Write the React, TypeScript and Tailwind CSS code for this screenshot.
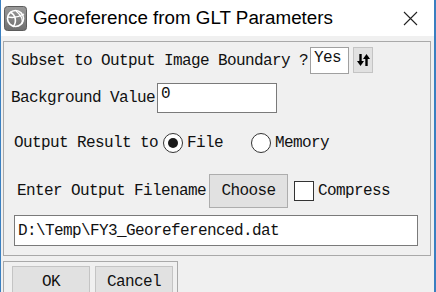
import React from "react";

// Dialog: Georeference from GLT Parameters

const mono = "font-['Liberation_Mono','DejaVu_Sans_Mono',monospace] text-[16px] tracking-[-0.6px] text-[#111]";

const GlobeIcon = () => (
  <svg width="23" height="25" viewBox="0 0 23 25">
    <defs>
      <linearGradient id="g" x1="0" y1="0" x2="0" y2="1">
        <stop offset="0" stopColor="#9a9a9a" />
        <stop offset="1" stopColor="#6e6e6e" />
      </linearGradient>
    </defs>
    <rect x="0.5" y="0.5" width="22" height="24" rx="3" fill="url(#g)" stroke="#5c5c5c" />
    <circle cx="11.5" cy="12.5" r="8" fill="none" stroke="#fff" strokeWidth="1.6" />
    <path d="M6 6 C12 9 13 16 9 21" fill="none" stroke="#fff" strokeWidth="1.6" />
    <path d="M4 11 C9 12 15 11 20 8" fill="none" stroke="#fff" strokeWidth="1.4" />
    <path d="M12 5 C17 9 19 14 18 18" fill="none" stroke="#fff" strokeWidth="1.2" />
  </svg>
);

const SwapIcon = () => (
  <svg width="13" height="14" viewBox="0 0 13 14">
    <path d="M3.5 1 V9" stroke="#000" strokeWidth="2.4" />
    <path d="M0 8 L3.5 13 L7 8 Z" fill="#000" />
    <path d="M9.5 13 V5" stroke="#000" strokeWidth="2.4" />
    <path d="M6 6 L9.5 1 L13 6 Z" fill="#000" />
  </svg>
);

const Radio = ({ checked }: { checked?: boolean }) => (
  <span className="w-[20px] h-[20px] rounded-full border border-[#333] bg-white flex items-center justify-center">
    {checked && <span className="w-[10px] h-[10px] rounded-full bg-[#1a1a1a]" />}
  </span>
);

export default function App() {
  return (
    <div className="w-[436px] h-[292px] overflow-hidden bg-[#f0f0f0] border-l border-r-2 border-[#3a7fc0] flex flex-col">
      {/* Title bar */}
      <div className="h-[36px] bg-white flex items-center pl-[3px] shrink-0">
        <GlobeIcon />
        <span className="ml-[6px] text-[18.8px] text-black font-['Liberation_Sans','Noto_Sans',sans-serif]">
          Georeference from GLT Parameters
        </span>
        <svg className="ml-auto mr-[16px]" width="15" height="15" viewBox="0 0 15 15">
          <path d="M1 1 L14 14 M14 1 L1 14" stroke="#222" strokeWidth="1.1" />
        </svg>
      </div>

      {/* Parameters panel */}
      <div className="mt-[5px] ml-[2px] w-[428px] h-[215px] border border-[#a9a9a9] flex flex-col shrink-0">
        <div className="flex items-start mt-[5px] pl-[7px] h-[27px]">
          <span className={`${mono} mt-[2px]`}>Subset to Output Image Boundary ?</span>
          <span className={`${mono} ml-[2px] w-[39px] h-[27px] bg-white border border-[#a0a0a0] pl-[3px] leading-[20px]`}>Yes</span>
          <span className="ml-[4px] w-[20px] h-[26px] bg-[#e1e1e1] border border-[#c4c4c4] flex items-center justify-center">
            <SwapIcon />
          </span>
        </div>

        <div className="flex items-start mt-[9px] pl-[7px] h-[30px]">
          <span className={`${mono} mt-[3px]`}>Background Value</span>
          <span className={`${mono} ml-[2px] w-[120px] h-[30px] bg-white border border-[#7a7a7a] pl-[3px] leading-[20px]`}>0</span>
        </div>

        <div className="flex items-center mt-[18px] pl-[10px] h-[24px]">
          <span className={mono}>Output Result to</span>
          <span className="ml-[5px]"><Radio checked /></span>
          <span className={`${mono} ml-[4px]`}>File</span>
          <span className="ml-[28px]"><Radio /></span>
          <span className={`${mono} ml-[4px]`}>Memory</span>
        </div>

        <div className="flex items-center mt-[19px] pl-[13px] h-[34px]">
          <span className={mono}>Enter Output Filename</span>
          <span className={`${mono} ml-[3px] w-[79px] h-[34px] bg-[#e1e1e1] border border-[#adadad] flex items-center justify-center`}>Choose</span>
          <span className="ml-[6px] w-[20px] h-[20px] bg-white border border-[#333]" />
          <span className={`${mono} ml-[4px]`}>Compress</span>
        </div>

        <div className={`${mono} mt-[7px] ml-[10px] w-[404px] h-[31px] bg-white border border-[#7a7a7a] flex items-center pl-[3px]`}>
          D:\Temp\FY3_Georeferenced.dat
        </div>
      </div>

      {/* Buttons */}
      <div className="flex items-start mt-[5px] shrink-0">
        <div className="ml-[2px] w-[175px] h-[40px] border border-[#a9a9a9] flex gap-[5px] pl-[8px] pt-[4px]">
          <span className={`${mono} w-[78px] h-[32px] bg-[#e1e1e1] border border-[#c4c4c4] flex items-center justify-center`}>OK</span>
          <span className={`${mono} w-[78px] h-[32px] bg-[#e1e1e1] border border-[#c4c4c4] flex items-center justify-center`}>Cancel</span>
        </div>
        <span className="ml-[104px] mt-[27px] whitespace-nowrap text-[13px] text-black font-['Liberation_Sans',sans-serif]">
          lll ld l ll ll lll llll lll ll
        </span>
      </div>
    </div>
  );
}
